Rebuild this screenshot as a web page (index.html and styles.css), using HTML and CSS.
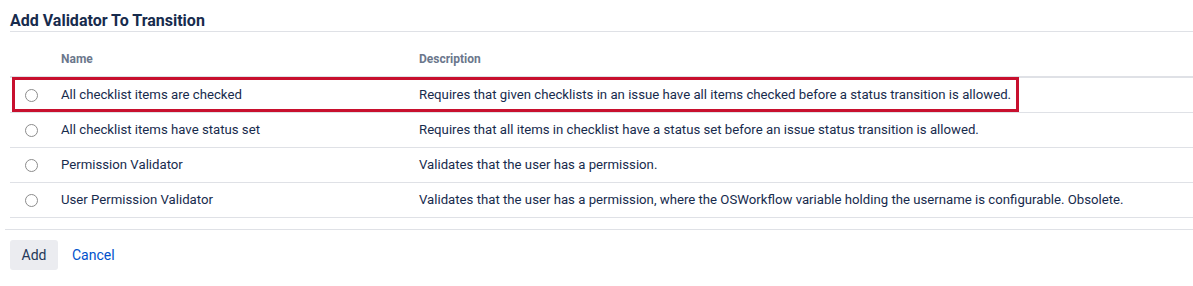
FILE: index.html
```html
<!DOCTYPE html>
<html>
<head>
<meta charset="utf-8">
<link rel="stylesheet" href="styles.css">
</head>
<body>
<div class="page">
  <h2 class="title">Add Validator To Transition</h2>
  <div class="table-wrap">
    <table class="validators">
      <colgroup>
        <col class="c-radio">
        <col class="c-name">
        <col class="c-desc">
      </colgroup>
      <thead>
        <tr><th></th><th>Name</th><th>Description</th></tr>
      </thead>
      <tbody>
        <tr><td><span class="radio"></span></td><td>All checklist items are checked</td><td>Requires that given checklists in an issue have all items checked before a status transition is allowed.</td></tr>
        <tr><td><span class="radio"></span></td><td>All checklist items have status set</td><td>Requires that all items in checklist have a status set before an issue status transition is allowed.</td></tr>
        <tr><td><span class="radio"></span></td><td>Permission Validator</td><td>Validates that the user has a permission.</td></tr>
        <tr><td><span class="radio"></span></td><td>User Permission Validator</td><td>Validates that the user has a permission, where the OSWorkflow variable holding the username is configurable. Obsolete.</td></tr>
      </tbody>
    </table>
    <div class="highlight"></div>
  </div>
  <div class="footer">
    <button class="btn">Add</button>
    <a class="cancel" href="#">Cancel</a>
  </div>
</div>
</body>
</html>
```
FILE: styles.css
```css
html, body {
  margin: 0;
  padding: 0;
  background: #fff;
}
body {
  font-family: Roboto, "Liberation Sans", sans-serif;
  color: #172b4d;
  font-size: 13.2px;
}
.page {
  padding: 11px 0 0 10px;
}
.title {
  margin: 0;
  font-size: 16px;
  line-height: 20px;
  font-weight: 700;
  padding-bottom: 0;
  border-bottom: 1px solid #dfe1e6;
  color: #172b4d;
}
.table-wrap {
  position: relative;
}
.validators {
  width: 100%;
  border-collapse: collapse;
  table-layout: fixed;
}
.c-radio { width: 51px; }
.c-name { width: 358px; }
.validators th {
  text-align: left;
  font-size: 12px;
  font-weight: 700;
  color: #6b778c;
  height: 44px;
  box-sizing: border-box;
  padding: 17px 0 7px;
  line-height: 20px;
  border-bottom: 2px solid #dfe1e6;
}
.validators td {
  height: 34px;
  padding: 0;
  line-height: 20px;
  vertical-align: middle;
  border-bottom: 1px solid #dfe1e6;
  white-space: nowrap;
}
.radio {
  display: block;
  width: 11px;
  height: 11px;
  margin-left: 15px;
  border: 1px solid #8c8c8c;
  border-radius: 50%;
}
.highlight {
  position: absolute;
  left: 2px;
  top: 45px;
  width: 1001px;
  height: 29px;
  border: 3px solid #c8102e;
}
.footer {
  margin: 11px 0 0 -5px;
  padding: 10px 0 0 5px;
  border-top: 1px solid #dfe1e6;
  display: flex;
  align-items: center;
  gap: 14px;
}
.btn {
  font-family: inherit;
  font-size: 14px;
  color: #253858;
  background: #ebecf0;
  border: none;
  border-radius: 3px;
  height: 30px;
  width: 48px;
  padding: 0;
}
.cancel {
  font-size: 14px;
  color: #0052cc;
  text-decoration: none;
}
```
